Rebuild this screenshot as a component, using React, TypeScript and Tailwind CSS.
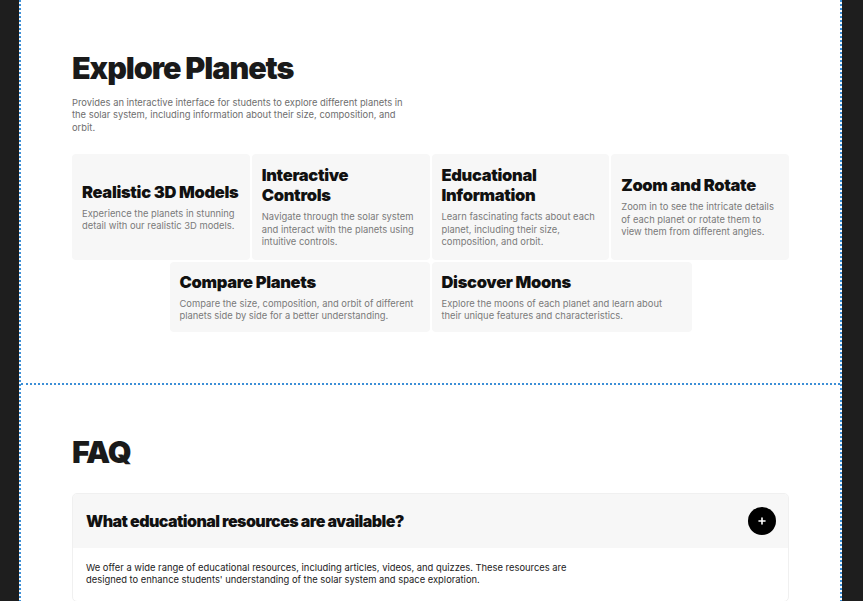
import React from 'react';

const features = [
  {
    title: ['Realistic 3D Models'],
    text: 'Experience the planets in stunning detail with our realistic 3D models.',
  },
  {
    title: ['Interactive', 'Controls'],
    text: 'Navigate through the solar system and interact with the planets using intuitive controls.',
  },
  {
    title: ['Educational', 'Information'],
    text: 'Learn fascinating facts about each planet, including their size, composition, and orbit.',
  },
  {
    title: ['Zoom and Rotate'],
    text: 'Zoom in to see the intricate details of each planet or rotate them to view them from different angles.',
  },
];

const extras = [
  {
    title: ['Compare Planets'],
    text: 'Compare the size, composition, and orbit of different planets side by side for a better understanding.',
  },
  {
    title: ['Discover Moons'],
    text: 'Explore the moons of each planet and learn about their unique features and characteristics.',
  },
];

const FeatureCard: React.FC<{ title: string[]; text: string; className?: string }> = ({ title, text, className = '' }) => (
  <div className={`flex flex-col justify-center rounded-[4px] bg-[#f7f7f7] p-[10px] ${className}`}>
    <h3 className="text-[16.5px] font-black leading-[20px] tracking-[-0.02em] text-[#111]">
      {title.map((line) => (
        <span key={line} className="block whitespace-nowrap">
          {line}
        </span>
      ))}
    </h3>
    <p className="mt-[6px] text-[9.4px] leading-[12.5px] text-[#7a7a7a]">{text}</p>
  </div>
);

export default function App() {
  return (
    <div className="min-h-screen bg-[#1e1e1e]" style={{ fontFamily: 'Inter, "Noto Sans", sans-serif' }}>
      <div className="ml-[19px] w-[823px] border-x-2 border-dotted border-[#3d8fd6] bg-white">
        {/* Explore section */}
        <section className="px-[51px] pt-[53px] pb-[51px]">
          <h1 className="text-[30.5px] font-black leading-none tracking-[-0.035em] text-[#1a1a1a]">Explore Planets</h1>
          <p className="mt-[13px] w-[340px] text-[9.4px] leading-[12.5px] text-[#6e6e6e]">
            Provides an interactive interface for students to explore different planets in the solar system, including
            information about their size, composition, and orbit.
          </p>
          <div className="mt-[20px] grid grid-cols-4 gap-[2px]">
            {features.map((f) => (
              <FeatureCard key={f.title[0]} title={f.title} text={f.text} className="h-[106px]" />
            ))}
          </div>
          <div className="mt-[2px] flex justify-center gap-[2px]">
            {extras.map((f) => (
              <FeatureCard key={f.title[0]} title={f.title} text={f.text} className="h-[70px] w-[260px]" />
            ))}
          </div>
        </section>

        <div className="border-t-2 border-dotted border-[#3d8fd6]" />

        {/* FAQ section */}
        <section className="px-[51px] pt-[52px] pb-[40px]">
          <h2 className="text-[30.5px] font-black leading-none tracking-[-0.035em] text-[#1a1a1a]">FAQ</h2>
          <div className="mt-[25px] overflow-hidden rounded-[5px] border border-[#f0f0f0]">
            <div className="flex h-[54px] items-center justify-between bg-[#f7f7f7] pl-[13px] pr-[12px]">
              <span className="text-[16px] font-black tracking-[-0.035em] text-[#111]">
                What educational resources are available?
              </span>
              <button className="flex h-[28px] w-[28px] items-center justify-center rounded-full bg-black">
                <svg width="8" height="8" viewBox="0 0 8 8">
                  <path d="M4 1v6M1 4h6" stroke="white" strokeWidth="1.6" strokeLinecap="round" />
                </svg>
              </button>
            </div>
            <div className="px-[13px] pt-[14px] pb-[14px]">
              <p className="w-[490px] text-[9.4px] leading-[12.5px] text-[#222]">
                We offer a wide range of educational resources, including articles, videos, and quizzes. These resources
                are designed to enhance students' understanding of the solar system and space exploration.
              </p>
            </div>
          </div>
        </section>
      </div>
    </div>
  );
}
